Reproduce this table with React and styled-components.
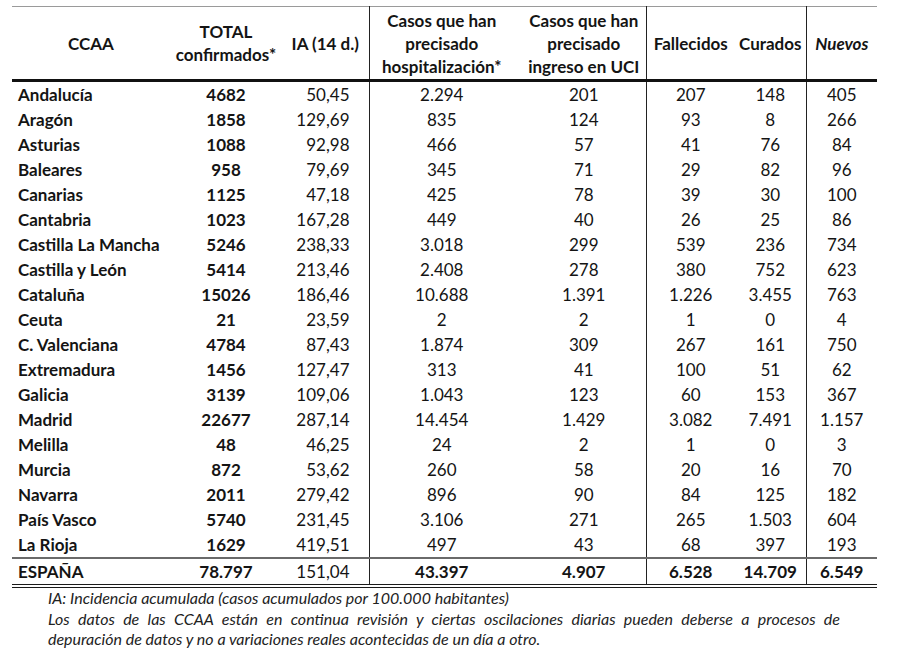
import React from 'react';
import styled, { createGlobalStyle } from 'styled-components';

const GlobalStyle = createGlobalStyle`
  html, body {
    margin: 0;
    padding: 0;
    background: #ffffff;
  }
  body {
    font-family: Lato, "Open Sans", "Liberation Sans", sans-serif;
    color: #141414;
  }
`;

const Page = styled.div`
  width: 897px;
  height: 651px;
  padding: 6px 0 0 12px;
  box-sizing: border-box;
  overflow: hidden;
`;

const Table = styled.table`
  width: 865px;
  border-collapse: collapse;
  table-layout: fixed;
  font-size: 17px;
  border-top: 1px solid #9a9a9a;
  border-bottom: 4px double #1a1a1a;
`;

const Head = styled.thead`
  border-bottom: 3px solid #111;
`;

const Th = styled.th`
  height: 72px;
  padding: 0 0 0 ${({ $pl }) => $pl || 0}px;
  font-weight: 700;
  line-height: 23px;
  text-align: center;
  vertical-align: middle;
  white-space: nowrap;
  font-style: ${({ $italic }) => ($italic ? 'italic' : 'normal')};
  border-right: ${({ $divider }) => ($divider ? '1px solid #222' : 'none')};
`;

const Row = styled.tr`
  border-top: ${({ $total }) => ($total ? '2px solid #6a6a6a' : 'none')};
`;

const Td = styled.td`
  height: 25px;
  padding: 0 ${({ $pr }) => $pr || 0}px 0 ${({ $pl }) => $pl || 0}px;
  line-height: 25px;
  white-space: nowrap;
  text-align: ${({ $align }) => $align || 'center'};
  font-weight: ${({ $bold }) => ($bold ? 700 : 400)};
  border-right: ${({ $divider }) => ($divider ? '1px solid #222' : 'none')};
`;

const Notes = styled.div`
  width: 792px;
  margin: 0 0 0 36px;
  font-size: 16px;
  font-style: italic;
  line-height: 20.5px;
  text-align: justify;
  color: #222;
`;

const NoteLine = styled.p`
  margin: 0;
`;

const columns = [158, 112, 87, 145, 132, 89, 71, 71];

const rows = [
  ['Andalucía', '4682', '50,45', '2.294', '201', '207', '148', '405'],
  ['Aragón', '1858', '129,69', '835', '124', '93', '8', '266'],
  ['Asturias', '1088', '92,98', '466', '57', '41', '76', '84'],
  ['Baleares', '958', '79,69', '345', '71', '29', '82', '96'],
  ['Canarias', '1125', '47,18', '425', '78', '39', '30', '100'],
  ['Cantabria', '1023', '167,28', '449', '40', '26', '25', '86'],
  ['Castilla La Mancha', '5246', '238,33', '3.018', '299', '539', '236', '734'],
  ['Castilla y León', '5414', '213,46', '2.408', '278', '380', '752', '623'],
  ['Cataluña', '15026', '186,46', '10.688', '1.391', '1.226', '3.455', '763'],
  ['Ceuta', '21', '23,59', '2', '2', '1', '0', '4'],
  ['C. Valenciana', '4784', '87,43', '1.874', '309', '267', '161', '750'],
  ['Extremadura', '1456', '127,47', '313', '41', '100', '51', '62'],
  ['Galicia', '3139', '109,06', '1.043', '123', '60', '153', '367'],
  ['Madrid', '22677', '287,14', '14.454', '1.429', '3.082', '7.491', '1.157'],
  ['Melilla', '48', '46,25', '24', '2', '1', '0', '3'],
  ['Murcia', '872', '53,62', '260', '58', '20', '16', '70'],
  ['Navarra', '2011', '279,42', '896', '90', '84', '125', '182'],
  ['País Vasco', '5740', '231,45', '3.106', '271', '265', '1.503', '604'],
  ['La Rioja', '1629', '419,51', '497', '43', '68', '397', '193'],
];

const total = ['ESPAÑA', '78.797', '151,04', '43.397', '4.907', '6.528', '14.709', '6.549'];

const DataRow = ({ cells, isTotal }) => (
  <Row $total={isTotal}>
    <Td $align="left" $pl={6} $bold>{cells[0]}</Td>
    <Td $bold>{cells[1]}</Td>
    <Td $align="right" $pr={19} $divider>{cells[2]}</Td>
    <Td $bold={isTotal}>{cells[3]}</Td>
    <Td $pl={8} $bold={isTotal} $divider>{cells[4]}</Td>
    <Td $bold={isTotal}>{cells[5]}</Td>
    <Td $bold={isTotal} $divider>{cells[6]}</Td>
    <Td $bold={isTotal}>{cells[7]}</Td>
  </Row>
);

const App = () => (
  <Page>
    <GlobalStyle />
    <Table>
      <colgroup>
        {columns.map((w, i) => (
          <col key={i} style={{ width: w }} />
        ))}
      </colgroup>
      <Head>
        <tr>
          <Th>CCAA</Th>
          <Th>
            TOTAL
            <br />
            confirmados*
          </Th>
          <Th $divider>IA (14 d.)</Th>
          <Th>
            Casos que han
            <br />
            precisado
            <br />
            hospitalización*
          </Th>
          <Th $divider $pl={8}>
            Casos que han
            <br />
            precisado
            <br />
            ingreso en UCI
          </Th>
          <Th>Fallecidos</Th>
          <Th $divider>Curados</Th>
          <Th $italic>Nuevos</Th>
        </tr>
      </Head>
      <tbody>
        {rows.map((r) => (
          <DataRow key={r[0]} cells={r} />
        ))}
        <DataRow cells={total} isTotal />
      </tbody>
    </Table>
    <Notes>
      <NoteLine>IA: Incidencia acumulada (casos acumulados por 100.000 habitantes)</NoteLine>
      <NoteLine>
        Los datos de las CCAA están en continua revisión y ciertas oscilaciones diarias pueden deberse a procesos de
        depuración de datos y no a variaciones reales acontecidas de un día a otro.
      </NoteLine>
    </Notes>
  </Page>
);

export default App;
